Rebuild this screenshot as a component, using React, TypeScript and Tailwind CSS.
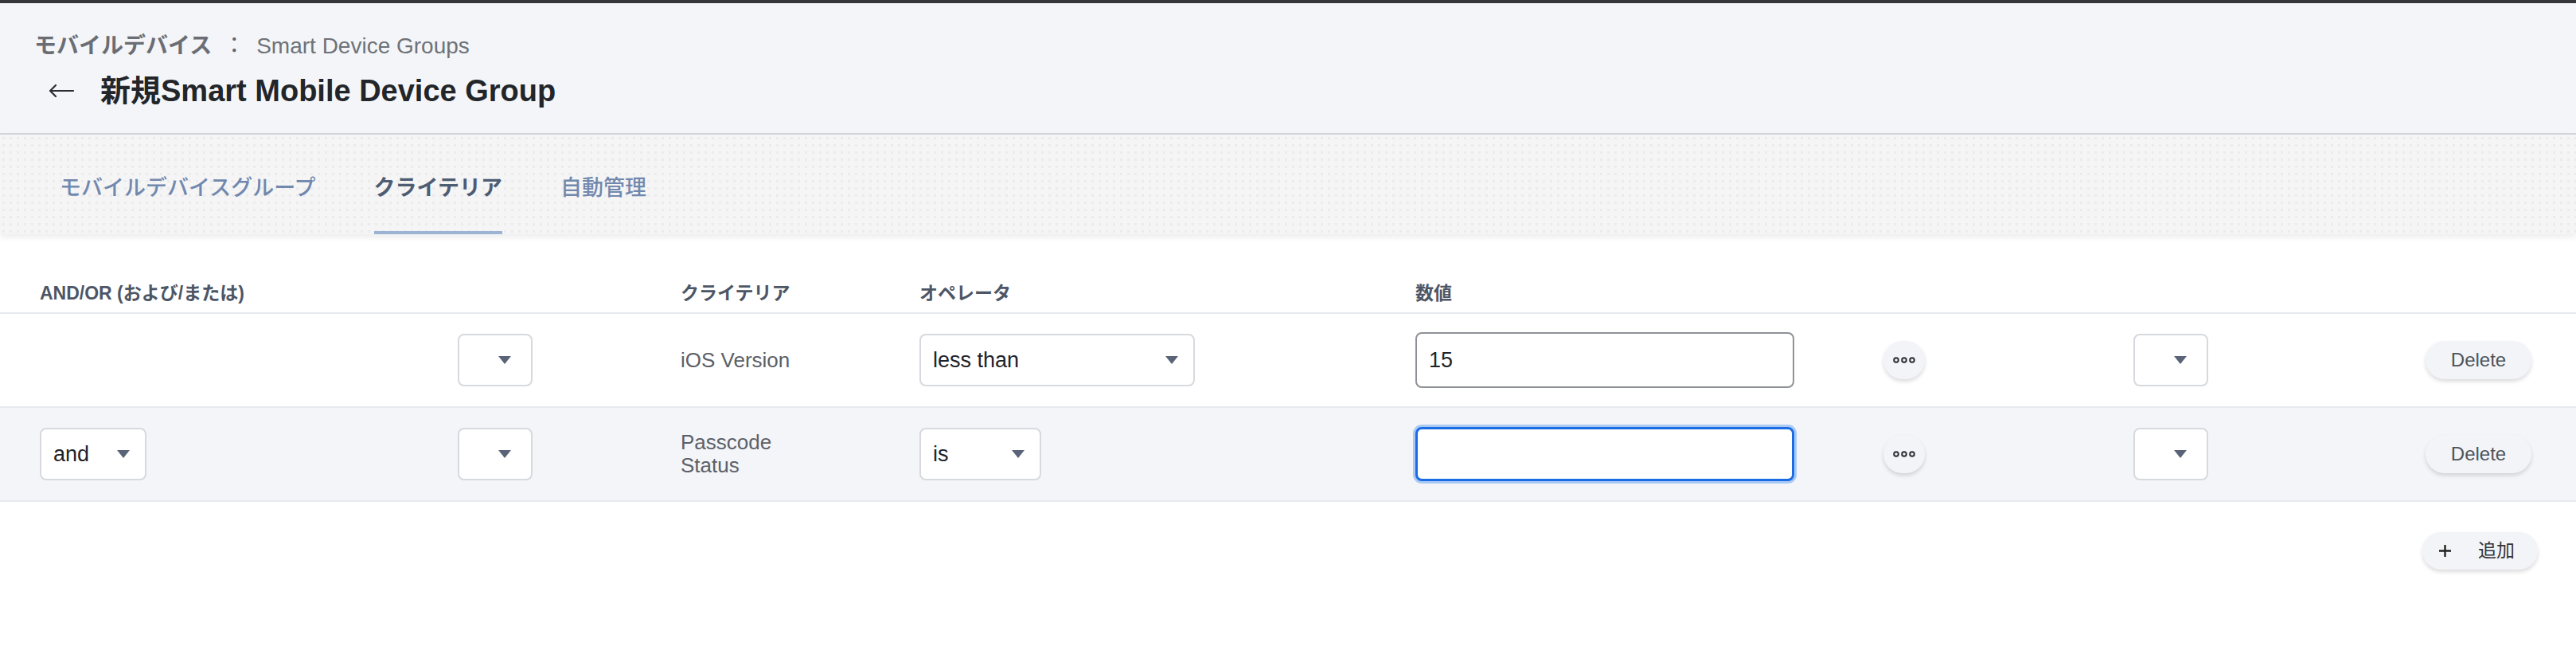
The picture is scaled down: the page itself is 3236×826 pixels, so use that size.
import React from "react";

const Caret = () => (
    <svg width="16" height="10" viewBox="0 0 16 10">
        <polygon points="0,0 16,0 8,10" fill="#5a6478" />
    </svg>
);

const Select = ({ label, width }: { label?: string; width: string }) => (
    <div
        className={`flex h-[66px] ${width} items-center justify-between rounded-[8px] border-2 border-[#d6d9dd] bg-white pl-[15px] pr-[19px] text-[27px] text-[#1f2328]`}
    >
        <span>{label ?? ""}</span>
        <Caret />
    </div>
);

const EmptySelect = () => (
    <div className="flex h-[66px] w-[94px] items-center justify-end rounded-[8px] border-2 border-[#d6d9dd] bg-white pr-[25px]">
        <Caret />
    </div>
);

const MoreButton = () => (
    <button className="flex h-[48px] w-[52px] items-center justify-center rounded-full bg-[#f3f4f7] shadow-[0_3px_5px_rgba(0,0,0,0.14)]">
        <svg width="28" height="8" viewBox="0 0 28 8">
            <circle cx="4" cy="4" r="2.8" fill="none" stroke="#2b2f36" strokeWidth="2" />
            <circle cx="14" cy="4" r="2.8" fill="none" stroke="#2b2f36" strokeWidth="2" />
            <circle cx="24" cy="4" r="2.8" fill="none" stroke="#2b2f36" strokeWidth="2" />
        </svg>
    </button>
);

const DeleteButton = () => (
    <button className="flex h-[48px] w-[133px] items-center justify-center rounded-full bg-[#f3f4f7] text-[24px] text-[#4f535a] shadow-[0_3px_5px_rgba(0,0,0,0.14)]">
        Delete
    </button>
);

interface RowProps {
    andOr?: string;
    criteria: React.ReactNode;
    operator: string;
    operatorWidth: string;
    value: string;
    focused?: boolean;
    shaded?: boolean;
}

const CriteriaRow = ({ andOr, criteria, operator, operatorWidth, value, focused, shaded }: RowProps) => (
    <div
        className={`grid h-[118px] grid-cols-[525px_280px_300px_623px_588px_314px_367px_133px] items-center border-b-2 border-[#e6e9ee] pl-[50px] ${shaded ? "bg-[#f4f5f8]" : "bg-white"}`}
    >
        <div>{andOr ? <Select label={andOr} width="w-[134px]" /> : null}</div>
        <div>
            <EmptySelect />
        </div>
        <div className="max-w-[150px] text-[26px] leading-[29px] text-[#5b6068]">{criteria}</div>
        <div>
            <Select label={operator} width={operatorWidth} />
        </div>
        <div>
            {focused ? (
                <div className="flex h-[68px] w-[476px] items-center rounded-[8px] border-[3px] border-[#1a6de4] bg-white px-[15px] text-[27px] text-[#1f2328] shadow-[0_0_0_3px_rgba(80,150,240,0.45)]">
                    {value}
                </div>
            ) : (
                <div className="flex h-[70px] w-[476px] items-center rounded-[8px] border-2 border-[#8e9196] bg-white px-[15px] text-[27px] text-[#1f2328]">
                    {value}
                </div>
            )}
        </div>
        <div>
            <MoreButton />
        </div>
        <div>
            <EmptySelect />
        </div>
        <div>
            <DeleteButton />
        </div>
    </div>
);

export default function App() {
    return (
        <div className="min-h-[826px] w-[3236px] bg-white font-['Liberation_Sans','Noto_Sans_CJK_JP',sans-serif]">
            {/* Top strip */}
            <div className="h-[4px] bg-[#35363a]" />

            {/* Header */}
            <div className="border-b-2 border-[#d3d5d9] bg-[#f4f5f8] px-[43px] pt-[37px] pb-[29px]">
                <div className="flex items-center text-[28px] leading-[33px]">
                    <span className="font-bold text-[#6a6e74]">モバイルデバイス</span>
                    <span className="mx-[14px] text-[#62666c]">：</span>
                    <span className="text-[#6e7277]">Smart Device Groups</span>
                </div>
                <div className="mt-[16px] flex items-center gap-[33px] pl-[18px]">
                    <svg width="32" height="18" viewBox="0 0 32 18">
                        <path d="M31 9H2M9 2L2 9l7 7" fill="none" stroke="#2a2d31" strokeWidth="2.2" strokeLinecap="round" strokeLinejoin="round" />
                    </svg>
                    <h1 className="text-[38px] leading-[48px] font-bold text-[#222529]">新規Smart Mobile Device Group</h1>
                </div>
            </div>

            {/* Tabs */}
            <div className="relative z-10 flex h-[125px] gap-[73px] bg-[#f5f5f6] bg-[radial-gradient(#ebebed_1.8px,transparent_2px)] bg-[length:9px_9px] pl-[75px] shadow-[0_4px_7px_rgba(0,0,0,0.07)]">
                <div className="flex h-full items-center border-b-4 border-transparent pt-[14px] text-[27px] font-medium text-[#7188ad]">
                    モバイルデバイスグループ
                </div>
                <div className="flex h-full items-center border-b-4 border-[#9bb4d3] pt-[14px] text-[27px] font-bold text-[#4d5b73]">
                    クライテリア
                </div>
                <div className="flex h-full items-center border-b-4 border-transparent pt-[14px] text-[27px] font-medium text-[#7188ad]">
                    自動管理
                </div>
            </div>

            {/* Table header */}
            <div className="grid h-[100px] grid-cols-[525px_280px_300px_623px_588px_314px_367px_133px] items-end border-b-2 border-[#e6e9ee] pb-[10px] pl-[50px] text-[23px] leading-[28px] font-bold text-[#4d5666]">
                <div>AND/OR (および/または)</div>
                <div />
                <div>クライテリア</div>
                <div>オペレータ</div>
                <div>数値</div>
                <div />
                <div />
                <div />
            </div>

            {/* Rows */}
            <CriteriaRow criteria="iOS Version" operator="less than" operatorWidth="w-[346px]" value="15" />
            <CriteriaRow
                andOr="and"
                criteria={
                    <>
                        Passcode
                        <br />
                        Status
                    </>
                }
                operator="is"
                operatorWidth="w-[153px]"
                value=""
                focused
                shaded
            />

            {/* Add */}
            <div className="flex justify-end pt-[38px] pr-[48px]">
                <button className="flex h-[47px] w-[145px] items-center gap-[33px] rounded-full bg-[#f3f4f7] pl-[20px] text-[23px] text-[#333539] shadow-[0_3px_5px_rgba(0,0,0,0.14)]">
                    <svg width="17" height="17" viewBox="0 0 17 17">
                        <path d="M8.5 1v15M1 8.5h15" stroke="#222" strokeWidth="2.4" />
                    </svg>
                    <span>追加</span>
                </button>
            </div>
        </div>
    );
}
